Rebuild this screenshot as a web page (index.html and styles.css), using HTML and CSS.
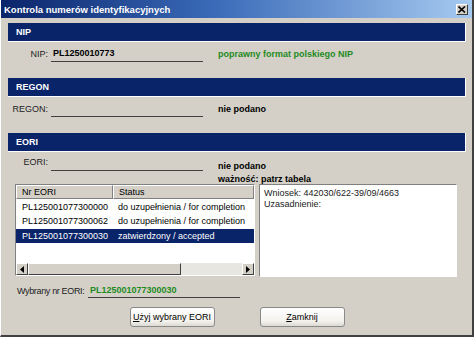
FILE: index.html
```html
<!DOCTYPE html>
<html lang="pl">
<head>
    <meta charset="UTF-8">
    <title>Kontrola numerów identyfikacyjnych</title>
    <link rel="stylesheet" href="styles.css">
</head>
<body>
    <div class="window">
        <div class="titlebar">
            <span class="title-text">Kontrola numerów identyfikacyjnych</span>
            <span class="close-btn">
                <svg width="8" height="7" viewBox="0 0 8 7"><path d="M0.5 0.5 L7 6.5 M7 0.5 L0.5 6.5" stroke="#000" stroke-width="1.6"/></svg>
            </span>
        </div>

        <div class="content">
            <div class="section-bar">NIP</div>
            <div class="field-row">
                <span class="field-label">NIP:</span>
                <span class="field-value">PL1250010773</span>
                <span class="field-status ok">poprawny format polskiego NIP</span>
            </div>

            <div class="section-bar">REGON</div>
            <div class="field-row">
                <span class="field-label">REGON:</span>
                <span class="field-value"></span>
                <span class="field-status">nie podano</span>
            </div>

            <div class="section-bar">EORI</div>
            <div class="field-row eori-row">
                <span class="field-label">EORI:</span>
                <span class="field-value"></span>
                <div class="field-status multi">
                    <div>nie podano</div>
                    <div>ważność: patrz tabela</div>
                </div>
            </div>

            <div class="eori-panes">
                <div class="list-view">
                    <div class="list-head">
                        <div class="col-nr">Nr EORI</div>
                        <div class="col-status">Status</div>
                    </div>
                    <div class="list-body">
                        <div class="list-row">
                            <div class="col-nr">PL125001077300000</div>
                            <div class="col-status">do uzupełnienia / for completion</div>
                        </div>
                        <div class="list-row">
                            <div class="col-nr">PL125001077300062</div>
                            <div class="col-status">do uzupełnienia / for completion</div>
                        </div>
                        <div class="list-row selected">
                            <div class="col-nr">PL125001077300030</div>
                            <div class="col-status">zatwierdzony / accepted</div>
                        </div>
                    </div>
                    <div class="hscroll">
                        <span class="scroll-btn"><svg width="4" height="7" viewBox="0 0 4 7"><path d="M4 0 L0 3.5 L4 7 Z" fill="#000"/></svg></span>
                        <span class="scroll-track"><span class="scroll-thumb"></span></span>
                        <span class="scroll-btn"><svg width="4" height="7" viewBox="0 0 4 7"><path d="M0 0 L4 3.5 L0 7 Z" fill="#000"/></svg></span>
                    </div>
                </div>
                <div class="detail-box">
                    <div>Wniosek: 442030/622-39/09/4663</div>
                    <div>Uzasadnienie:</div>
                </div>
            </div>

            <div class="chosen-row">
                <span class="chosen-label">Wybrany nr EORI:</span>
                <span class="chosen-value">PL125001077300030</span>
            </div>

            <div class="button-row">
                <button class="win-btn"><u>U</u>żyj wybrany EORI</button>
                <button class="win-btn"><u>Z</u>amknij</button>
            </div>
        </div>
    </div>
</body>
</html>
```

FILE: styles.css
```css
body {
    margin: 0;
    padding: 0;
    font-family: "Liberation Sans", Arial, sans-serif;
    font-size: 9px;
    color: #000;
    background-color: #d4d0c8;
}

.window {
    width: 474px;
    height: 337px;
    box-sizing: border-box;
    background-color: #d4d0c8;
    border-right: 2px solid #404040;
    border-bottom: 2px solid #404040;
    border-left: 1px solid #ffffff;
    overflow: hidden;
}

.titlebar {
    height: 18px;
    display: flex;
    align-items: center;
    justify-content: space-between;
    padding: 0 4px 0 3px;
    background: linear-gradient(to right, #0a246a 0%, #3a6ab8 45%, #a6caf0 100%);
    color: #fff;
}

.title-text {
    font-weight: bold;
    font-size: 9.5px;
}

.close-btn {
    width: 10px;
    height: 9px;
    display: flex;
    align-items: center;
    justify-content: center;
    background-color: #d4d0c8;
    border: 1px solid;
    border-color: #fff #404040 #404040 #fff;
    margin-top: 1px;
}

.content {
    padding: 5px 6px 0 7px;
}

.section-bar {
    height: 19px;
    line-height: 19px;
    background-color: #0a246a;
    color: #fff;
    font-weight: bold;
    padding-left: 8px;
    border-right: 1px solid #fff;
    border-bottom: 1px solid #fff;
    box-sizing: border-box;
}

.field-row {
    display: flex;
    align-items: flex-end;
    height: 16px;
    margin: 4px 0 16px 0;
}

.field-label {
    width: 40px;
    text-align: right;
    padding-right: 3px;
    line-height: 16px;
    color: #222;
}

.field-value {
    width: 150px;
    height: 15px;
    line-height: 15px;
    padding-left: 2px;
    border-bottom: 1px solid #404040;
    font-weight: bold;
}

.field-status {
    margin-left: 15px;
    font-weight: bold;
    line-height: 16px;
}

.field-status.ok {
    color: #1f8a1f;
}

.eori-row {
    margin: 2px 0 0 0;
    align-items: flex-start;
}

.eori-row .field-value {
    height: 16px;
}

.field-status.multi {
    line-height: 13px;
    padding-top: 6px;
}

.eori-panes {
    display: flex;
    gap: 4px;
    margin-top: 14px;
    margin-left: 7px;
    height: 92px;
}

.list-view {
    width: 240px;
    box-sizing: border-box;
    border: 1px solid;
    border-color: #808080 #fff #fff #808080;
    display: flex;
    flex-direction: column;
    background-color: #fff;
}

.list-head {
    display: flex;
    height: 14px;
    line-height: 13px;
    background-color: #d4d0c8;
}

.list-head div {
    box-sizing: border-box;
    padding-left: 5px;
    border: 1px solid;
    border-color: #fff #808080 #808080 #fff;
}

.col-nr {
    width: 97px;
    flex-shrink: 0;
    box-sizing: border-box;
}

.col-status {
    flex: 1;
    white-space: nowrap;
    overflow: hidden;
}

.list-body {
    flex: 1;
    padding-top: 1px;
}

.list-row {
    display: flex;
    height: 14px;
    line-height: 14px;
}

.list-row .col-nr {
    padding-left: 6px;
}

.list-row .col-status {
    padding-left: 5px;
}

.list-row.selected {
    background-color: #0a246a;
    color: #fff;
    margin-top: 1px;
}

.hscroll {
    display: flex;
    height: 12px;
    background-color: #e8e6e0;
}

.scroll-btn {
    width: 12px;
    box-sizing: border-box;
    display: flex;
    align-items: center;
    justify-content: center;
    background-color: #d4d0c8;
    border: 1px solid;
    border-color: #fff #404040 #404040 #fff;
}

.scroll-track {
    flex: 1;
    display: flex;
}

.scroll-thumb {
    width: 153px;
    box-sizing: border-box;
    background-color: #d4d0c8;
    border: 1px solid;
    border-color: #fff #404040 #404040 #fff;
}

.detail-box {
    width: 198px;
    height: 93px;
    box-sizing: border-box;
    background-color: #fff;
    border: 1px solid;
    border-color: #808080 #fff #fff #808080;
    padding: 3px 4px;
    line-height: 11px;
    color: #222;
}

.chosen-row {
    display: flex;
    align-items: flex-end;
    margin: 7px 0 0 9px;
}

.chosen-label {
    width: 71px;
    flex-shrink: 0;
    white-space: nowrap;
    letter-spacing: -0.35px;
    line-height: 14px;
    color: #222;
}

.chosen-value {
    width: 150px;
    padding-left: 2px;
    line-height: 14px;
    border-bottom: 1px solid #404040;
    font-weight: bold;
    color: #1f8a1f;
}

.button-row {
    display: flex;
    justify-content: center;
    gap: 45px;
    margin-top: 9px;
}

.win-btn {
    width: 85px;
    height: 20px;
    font-family: "Liberation Sans", Arial, sans-serif;
    font-size: 9px;
    color: #000;
    background: linear-gradient(to bottom, #ffffff 0%, #f4f3ee 70%, #dcdad2 100%);
    border: 1px solid #8a8a8a;
    border-radius: 3px;
    padding: 0;
}
```
